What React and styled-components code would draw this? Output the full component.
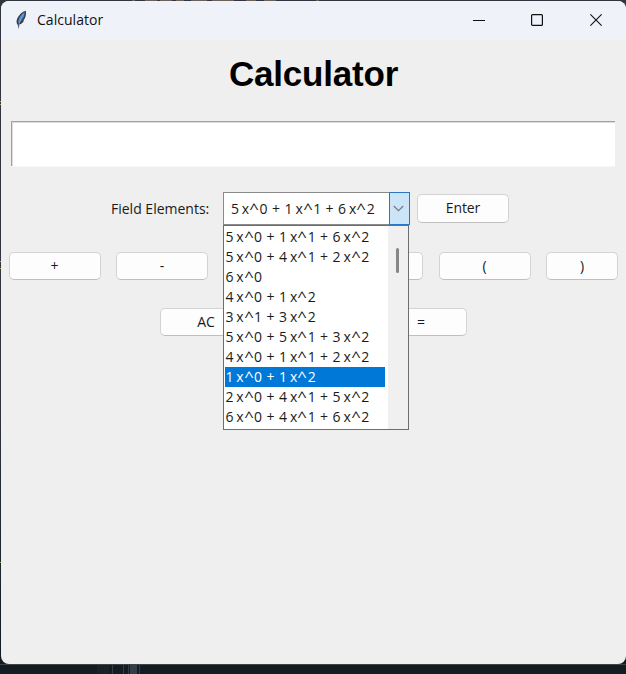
import React from 'react';
import styled, { createGlobalStyle } from 'styled-components';

const Global = createGlobalStyle`
  * { box-sizing: border-box; }
  body { margin: 0; overflow: hidden; background: #131c25; }
`;

const Desktop = styled.div`
  position: relative;
  width: 626px;
  height: 674px;
  padding: 1px 0 0 1px;
  overflow: hidden;
  background: linear-gradient(#30353f 0 60%, #131c23 97%);
  font-family: "Open Sans", "Noto Sans", sans-serif;
  font-size: 14px;
  color: #1a1a1a;
`;

const Backdrop = styled.svg`
  position: absolute;
  left: 0;
  top: 0;
`;

const Window = styled.main`
  position: relative;
  width: 625px;
  height: 663px;
  border-radius: 8px;
  overflow: hidden;
  background: #efefef;
`;

const TitleBar = styled.header`
  display: flex;
  align-items: center;
  height: 39px;
  padding: 0 1px 1px 13px;
  background: #eff2f9;
`;

const WindowTitle = styled.span`
  flex: 1;
  margin-left: 8px;
  font-size: 14px;
  line-height: 38px;
  letter-spacing: 0.03px;
  color: #111;
`;

const Controls = styled.div`
  display: flex;
`;

const Control = styled.button`
  display: grid;
  place-items: center;
  width: 58.5px;
  height: 38px;
  padding: 0;
  border: 0;
  background: none;
`;

const Heading = styled.h1`
  margin: 13px 0 0;
  height: 41px;
  text-align: center;
  font: bold 35px/41px "Liberation Sans", Arial, sans-serif;
  letter-spacing: -0.2px;
  color: #000;
`;

const Display = styled.input`
  display: block;
  width: 604px;
  height: 45px;
  margin: 27px 0 0 10px;
  padding: 0 8px;
  border: 0;
  border-top: 1px solid #a0a0a0;
  border-left: 1px solid #a0a0a0;
  box-shadow: inset 1px 1px 0 #dedede, 0 1px 0 #f7f7f7;
  background: #fff;
  outline: none;
`;

const FieldRow = styled.div`
  display: flex;
  align-items: center;
  height: 33px;
  margin: 26px 0 0 110px;
`;

const Label = styled.label`
  width: 112px;
  font-size: 14px;
  letter-spacing: 0;
  white-space: nowrap;
`;

const Combo = styled.div`
  position: relative;
  width: 187px;
  height: 33px;
`;

const ComboField = styled.div`
  display: flex;
  height: 33px;
  border: 1px solid #8a8a8a;
  border-right: 0;
  background: #fff;
`;

const FormulaText = styled.span`
  flex: 1;
  white-space: pre;
  font-size: 14px;
  line-height: ${(p) => p.$line || 20}px;
  letter-spacing: 0.41px;
`;

const Term = styled.span`
  word-spacing: -1.6px;
`;

const Caret = styled.span`
  display: inline-block;
  margin: 0 0.9px 0 0.7px;
  transform: scaleX(1.2);
`;

const ComboValue = styled.div`
  display: flex;
  flex: 1;
  padding-left: 7px;
`;

const Arrow = styled.button`
  display: grid;
  place-items: center;
  width: 21px;
  height: 33px;
  margin-top: -1px;
  padding: 0 2px 0 0;
  border: 1px solid #2a78c4;
  background: #cce4f7;
`;

const Menu = styled.div`
  position: absolute;
  z-index: 2;
  left: 0;
  top: 33px;
  display: flex;
  width: 186px;
  height: 205px;
  border: 1px solid #6e6e6e;
  background: #fff;
`;

const Options = styled.ul`
  width: 164px;
  margin: 0;
  padding: 1px 3px 0 1px;
  list-style: none;
`;

const Option = styled.li`
  display: flex;
  height: 20px;
  padding-left: 0.5px;
  background: ${(p) => (p.$selected ? '#0078d7' : 'transparent')};
  color: ${(p) => (p.$selected ? '#fff' : '#1a1a1a')};
`;

const Scrollbar = styled.div`
  flex: 1;
  padding: 22px 0 0 8px;
  background: #f0f0f0;
`;

const Thumb = styled.div`
  width: 3px;
  height: 25px;
  border-radius: 2px;
  background: #868686;
`;

const Button = styled.button`
  flex: none;
  width: ${(p) => p.$width || 92}px;
  height: ${(p) => p.$height || 28}px;
  padding: 0 0 1px;
  border: 1px solid #d3d3d3;
  border-bottom-color: #bfbfbf;
  border-radius: 5px;
  background: #fdfdfd;
  color: #1a1a1a;
  font: 14px/26px "Open Sans", "Noto Sans", sans-serif;
  letter-spacing: -0.1px;
`;

const EnterSlot = styled.div`
  display: flex;
  margin-left: 7px;
`;

const KeyRow = styled.div`
  display: flex;
  gap: ${(p) => p.$gap || 15.5}px;
  margin: ${(p) => p.$top}px 0 0 ${(p) => p.$left}px;
`;

const options = [
  '5 x^0 + 1 x^1 + 6 x^2',
  '5 x^0 + 4 x^1 + 2 x^2',
  '6 x^0',
  '4 x^0 + 1 x^2',
  '3 x^1 + 3 x^2',
  '5 x^0 + 5 x^1 + 3 x^2',
  '4 x^0 + 1 x^1 + 2 x^2',
  '1 x^0 + 1 x^2',
  '2 x^0 + 4 x^1 + 5 x^2',
  '6 x^0 + 4 x^1 + 6 x^2',
];

function Formula({ text, line }) {
  return (
    <FormulaText $line={line}>
      {text.split(' + ').map((term, i) => {
        const [base, power] = term.split('^');
        return (
          <React.Fragment key={i}>
            {i > 0 && ' + '}
            <Term>{base}<Caret>^</Caret>{power}</Term>
          </React.Fragment>
        );
      })}
    </FormulaText>
  );
}

function Feather() {
  return (
    <svg width="15" height="20" viewBox="0 0 15 20">
      <path d="M11.800.7C7.800 1.600 3.800 6 2.700 10.200c-.4 1.800-.1 3.100.8 4.300L4.800 19l.5-4.400c2.400-.7 3.800-2.100 4.600-4.100l-.4-.6 1.300-1.400C12 5.700 12.300 3 11.800.7Z" fill="#3a3c42" />
      <path d="M10.800 2C7.500 3.600 4.300 8.200 4 13c2.500-.8 4-2.400 4.700-4.700l1.300-1.600Z" fill="#4687d3" />
      <path d="M9.700 3.800C7 7.500 5.200 11.500 4.800 17" fill="none" stroke="#9dbbd8" strokeWidth=".6" />
    </svg>
  );
}

export default function App() {
  return (
    <Desktop>
      <Global />
      <Backdrop width="626" height="674">
        <path d="M132 .5h3m10 0h12m3 0h12m4 0h8m7 0h16m5 0h22m12 0h10m8 0h12m40 0h3" stroke="#6b605c" />
        <path d="M0 101.500h1m-1 3h1m-1 157h1m-1 7h1m-1 294h1" stroke="#9aa36a" />
        <path d="M0 664.500h626" stroke="#3b4545" />
        <path d="M97 665h12v9H97z" fill="#192229" />
        <path d="M130 665h7v9h-7z" fill="#343e49" />
        <path d="M112.500 665v9m11-9v9m5-9v9m11-9v9" stroke="#343e49" />
      </Backdrop>
      <Window>
        <TitleBar>
          <Feather />
          <WindowTitle>Calculator</WindowTitle>
          <Controls>
            <Control aria-label="Minimize">
              <svg width="12" height="12"><path d="M0 6.500h12" stroke="#111" /></svg>
            </Control>
            <Control aria-label="Maximize">
              <svg width="12" height="12"><rect x=".6" y=".6" width="10.800" height="10.800" rx="1" fill="none" stroke="#111" strokeWidth="1.200" /></svg>
            </Control>
            <Control aria-label="Close">
              <svg width="12" height="12"><path d="m.4.4 11.200 11.200m0-11.200L.4 11.600" stroke="#111" strokeWidth="1.100" /></svg>
            </Control>
          </Controls>
        </TitleBar>
        <Heading>Calculator</Heading>
        <Display aria-label="Expression" />
        <FieldRow>
          <Label>Field Elements:</Label>
          <Combo>
            <ComboField>
              <ComboValue><Formula text={options[0]} line={32} /></ComboValue>
              <Arrow aria-label="Open list">
                <svg width="11" height="7"><path d="m.8 1 4.700 4.700L10.200 1" fill="none" stroke="#777" strokeWidth="1.100" /></svg>
              </Arrow>
            </ComboField>
            <Menu>
              <Options>
                {options.map((text, i) => (
                  <Option key={text} $selected={i === 7}><Formula text={text} /></Option>
                ))}
              </Options>
              <Scrollbar><Thumb /></Scrollbar>
            </Menu>
          </Combo>
          <EnterSlot><Button $height={29}>Enter</Button></EnterSlot>
        </FieldRow>
        <KeyRow $top={27} $left={7.5}>
          <Button>+</Button>
          <Button>-</Button>
          <Button />
          <Button />
          <Button>(</Button>
          <Button $width={72}>)</Button>
        </KeyRow>
        <KeyRow $top={28} $left={159} $gap={15.5}>
          <Button>AC</Button>
          <Button />
          <Button>=</Button>
        </KeyRow>
      </Window>
    </Desktop>
  );
}
